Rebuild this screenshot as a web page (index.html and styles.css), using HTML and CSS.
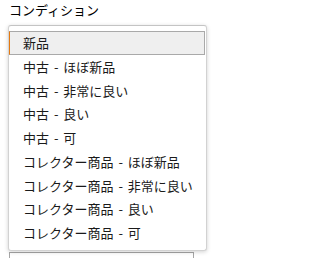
FILE: index.html
```html
<!DOCTYPE html>
<html lang="ja">
<head>
<meta charset="utf-8">
<link rel="stylesheet" href="styles.css">
</head>
<body>
<div class="page">
  <div class="label">コンディション</div>
  <div class="select-area">
    <ul class="popup">
      <li class="item selected">新品</li>
      <li class="item">中古 - ほぼ新品</li>
      <li class="item">中古 - 非常に良い</li>
      <li class="item">中古 - 良い</li>
      <li class="item">中古 - 可</li>
      <li class="item">コレクター商品 - ほぼ新品</li>
      <li class="item">コレクター商品 - 非常に良い</li>
      <li class="item">コレクター商品 - 良い</li>
      <li class="item">コレクター商品 - 可</li>
    </ul>
  </div>
  <div class="next-box"></div>
</div>
</body>
</html>
```
FILE: styles.css
```css
html, body {
  margin: 0;
  padding: 0;
  background: #ffffff;
  overflow: hidden;
}
.page {
  padding-left: 9px;
  font-family: "Noto Sans CJK JP", "Noto Sans", sans-serif;
  color: #111111;
}
.label {
  font-size: 13px;
  line-height: 19px;
  height: 19px;
  margin-bottom: 6px;
  color: #000000;
}
.select-area {
  position: relative;
  height: 227px;
}
.popup {
  position: absolute;
  left: -1px;
  top: 0;
  width: 197px;
  height: 219px;
  margin: 0;
  padding: 5px 0 0 0;
  box-sizing: content-box;
  list-style: none;
  background: #ffffff;
  border: 1px solid #d2d2d2;
  border-top-color: #c4c4c4;
  border-radius: 3px;
  box-shadow: 0 1px 4px rgba(0, 0, 0, 0.18);
  z-index: 2;
}
.item {
  font-size: 13px;
  line-height: 21.75px;
  height: 21.75px;
  padding-left: 13px;
  margin-right: 1px;
  border: 1px solid transparent;
  white-space: nowrap;
  word-spacing: 2px;
  color: #1a1a1a;
}
.item.selected {
  background: #efefef;
  border-color: #a9a9a9;
  border-left-color: #e47911;
}
.next-box {
  width: 183px;
  height: 10px;
  border: 1px solid #a6a6a6;
  border-bottom: none;
}
```
